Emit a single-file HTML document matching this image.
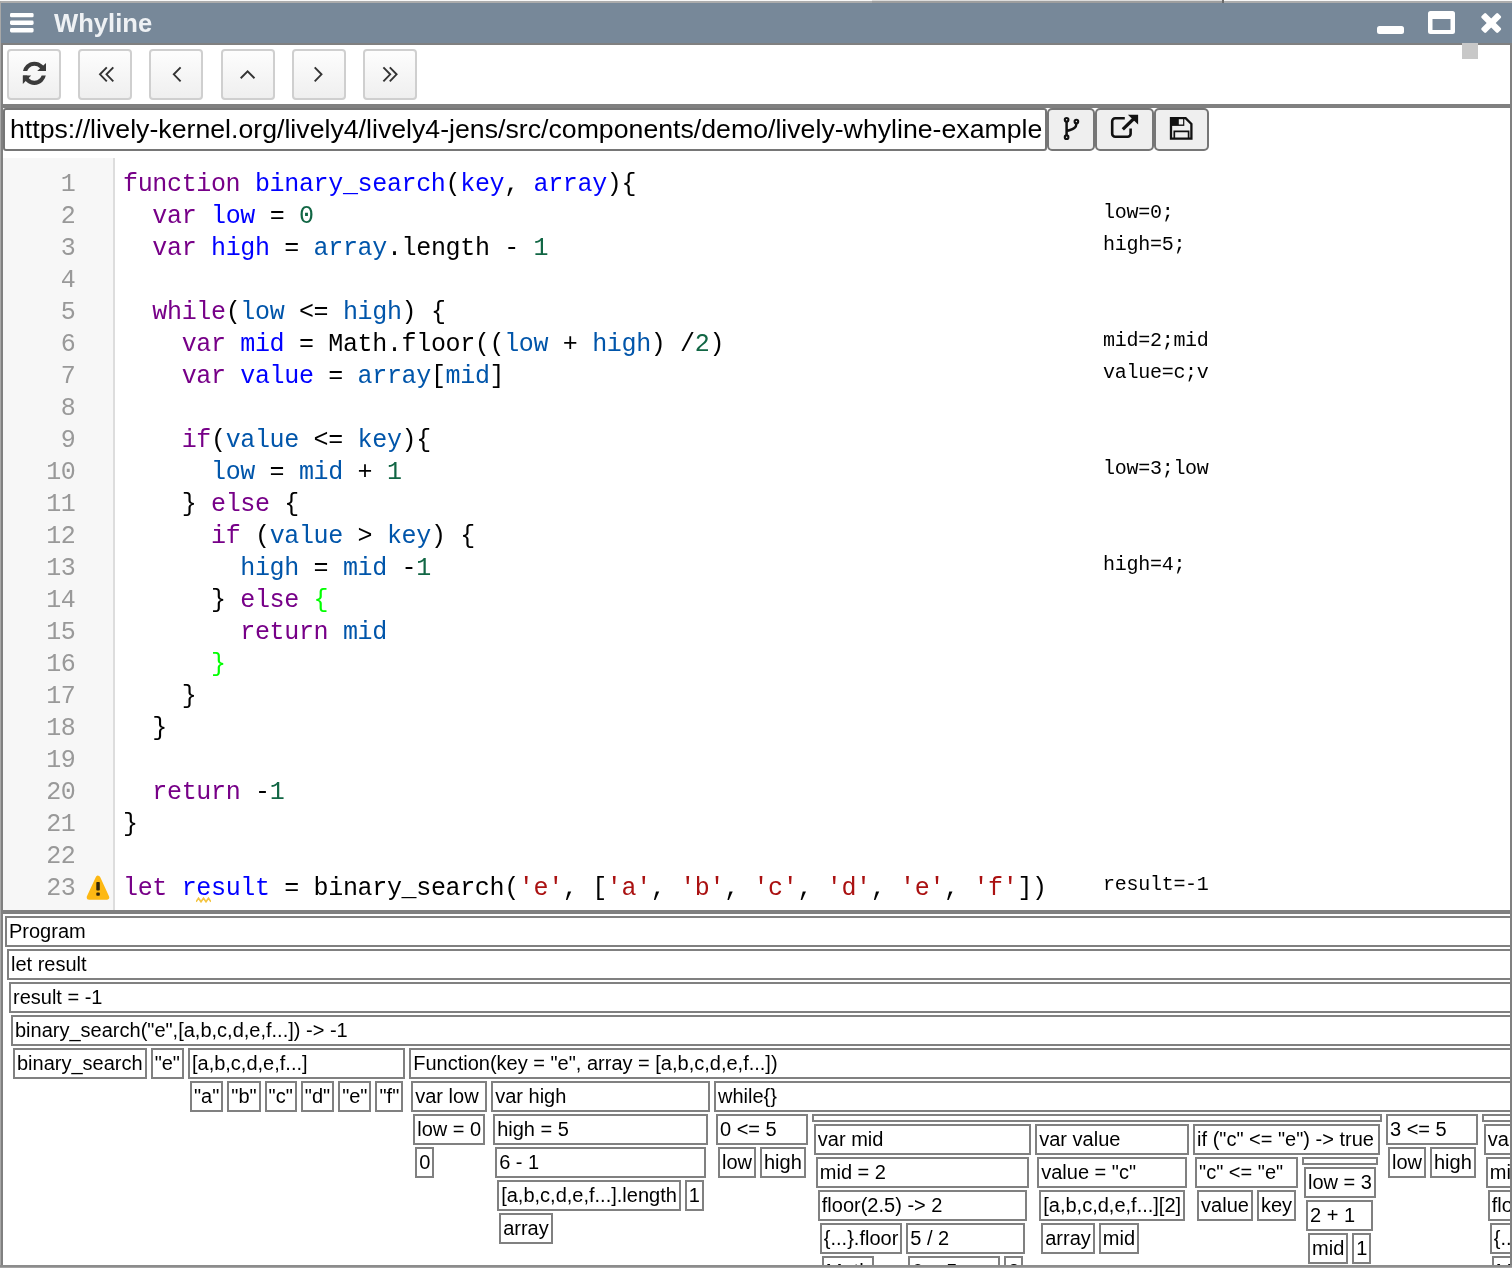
<!DOCTYPE html>
<html lang="en">
<head>
<meta charset="utf-8">
<title>Whyline</title>
<style>
*{box-sizing:border-box;margin:0;padding:0}
html,body{width:1512px;height:1268px;overflow:hidden;background:#f8f8f8}
body{position:relative;font-family:"Liberation Sans",sans-serif;color:#000}
#win{position:absolute;left:0;top:0;width:1512px;height:1268px;overflow:hidden;will-change:transform}
#frame-top{position:absolute;left:0;top:1px;width:1512px;height:2px;background:#acacac}
#frame-left{position:absolute;left:0;top:1px;width:1px;height:1267px;background:#a8a8a8}
#title{position:absolute;left:1px;top:3px;width:1511px;height:40px;background:#778899}
#title .name{position:absolute;left:53px;top:5px;font-weight:bold;font-size:25.6px;line-height:30px;color:#eef1f4;white-space:nowrap}
#title svg{position:absolute}
#content{position:absolute;left:1px;top:43px;width:1511px;height:1224px;border:2px solid #808080;background:#fff}
#grip{position:absolute;left:1462px;top:43px;width:16px;height:16px;background:#c8c8c8}
.nb{position:absolute;top:49px;width:54px;height:51px;border:2px solid #cfcfcf;border-radius:4px;background:linear-gradient(#fdfdfd,#efefef)}
.nb svg{position:absolute;left:0;top:0}
#sep1{position:absolute;left:3px;top:104px;width:1507px;height:4px;background:#808080}
#url{position:absolute;left:3px;top:108px;width:1044px;height:43px;border:2px solid #767676;border-radius:3px;background:#fff;font-size:26.67px;line-height:39px;padding-left:5px;white-space:nowrap;overflow:hidden;color:#000;letter-spacing:0.014px}
#url span{display:block;width:1033px;overflow:hidden}
.ub{position:absolute;top:108px;height:43px;border:2px solid #767676;border-radius:5px;background:#efefef}
.ub svg{position:absolute;left:0;top:0}
#code{position:absolute;left:3px;top:158px;width:1507px;height:752px;background:#fff;overflow:hidden;padding-top:8px;font-family:"Liberation Mono","DejaVu Sans Mono",monospace;font-size:25px;letter-spacing:-0.3425px}
#gutter{position:absolute;left:0;top:0;width:112px;height:752px;background:#f7f7f7;border-right:2px solid #ddd}
.row{position:relative;height:32px;line-height:32px;white-space:pre}
.row .ln{position:absolute;left:0;top:3px;width:72.5px;text-align:right;color:#999}
.row pre{position:absolute;left:120px;top:3px;font:inherit;line-height:32px;color:#000}
.row .an{position:absolute;left:1100px;top:-1px;width:106px;overflow:hidden;font-size:20px;letter-spacing:-0.272px;color:#000}
.row .warn{position:absolute;left:78px;top:0;width:32px;height:32px}
.k{color:#708}.d{color:#00f}.v{color:#05a}.m{color:#164}.s{color:#a11}.g{color:#0f0}
.row .sqg{position:absolute;left:193px;top:26.5px;width:15px;height:6px}
#sep2{position:absolute;left:3px;top:910px;width:1507px;height:4px;background:#808080}
#tree{position:absolute;left:3px;top:914px;width:1507px;height:351px;overflow:hidden;background:#fff;font-size:20px;line-height:23px;display:flex;align-items:flex-start}
.n{margin:2px;flex:none}
.l{border:2px solid #808080;padding:2px;white-space:nowrap;min-height:8px;color:#000}
.c{display:flex;align-items:flex-start}
#frame-bottom{position:absolute;left:0;top:1265px;width:1512px;height:3px;background:#a4a4a4;border-top:2px solid #8c8c8c}

</style>
</head>
<body>
<div id="win">
<div id="frame-top"></div>
<div id="frame-left"></div>
<div style="position:absolute;left:872px;top:0;width:350px;height:1px;background:#dcdcdc"></div><div style="position:absolute;left:872px;top:1px;width:350px;height:2px;background:#9e9e9e"></div><div style="position:absolute;left:1222px;top:0;width:2px;height:3px;background:#6a6a6a"></div>
<div id="content"></div>
<div id="title">
<svg style="left:9px;top:10px" width="24" height="20" viewBox="0 0 24 20"><rect x="0" y="0" width="23.6" height="4.3" rx="1.4" fill="#fff"/><rect x="0" y="7.6" width="23.6" height="4.3" rx="1.4" fill="#fff"/><rect x="0" y="15.1" width="23.6" height="4.3" rx="1.4" fill="#fff"/></svg>
<span class="name">Whyline</span>
<svg style="left:1376px;top:23px" width="28" height="9" viewBox="0 0 28 9"><rect x="0" y="0" width="27" height="8" rx="2.5" fill="#fff"/></svg>
<svg style="left:1426.500px;top:8px" width="28" height="24" viewBox="0 0 28 24"><path fill-rule="evenodd" d="M2.500 0h22a2.500 2.500 0 0 1 2.500 2.500v18a2.500 2.500 0 0 1-2.500 2.500h-22A2.500 2.500 0 0 1 0 20.500v-18A2.500 2.500 0 0 1 2.500 0zM4.500 8v11h18V8z" fill="#fff"/></svg>
<svg style="left:1479px;top:9px" width="23" height="23" viewBox="0 0 23 23"><g transform="translate(11.200,11) rotate(45)" fill="#fff"><rect x="-11.700" y="-3.200" width="23.400" height="6.400" rx="1.400"/><rect x="-3.200" y="-11.700" width="6.400" height="23.400" rx="1.400"/></g></svg>
</div>
<div id="grip"></div>
<div class="nb" style="left:7px"><svg width="50" height="47" viewBox="0 0 50 47"><defs><clipPath id="ct"><rect x="0" y="0" width="50" height="20.050"/></clipPath><clipPath id="cb"><rect x="0" y="24.500" width="50" height="23"/></clipPath></defs><circle cx="25.400" cy="22.300" r="9.550" fill="none" stroke="#3b3b3b" stroke-width="4.100" clip-path="url(#ct)"/><circle cx="25.400" cy="22.300" r="9.550" fill="none" stroke="#3b3b3b" stroke-width="4.100" clip-path="url(#cb)"/><path d="M37 11.900V20.050H28.200z" fill="#3b3b3b"/><path d="M13.800 32.950V24.500H22.200z" fill="#3b3b3b"/></svg></div>
<div class="nb" style="left:78px"><svg width="50" height="47" viewBox="0 0 50 47"><path d="M26.800 16.300l-6.800 7 6.800 7M33.300 16.300l-6.800 7 6.800 7" fill="none" stroke="#333" stroke-width="1.900"/></svg></div>
<div class="nb" style="left:149px"><svg width="50" height="47" viewBox="0 0 50 47"><path d="M29.600 16.300l-6.800 7 6.800 7" fill="none" stroke="#333" stroke-width="1.900"/></svg></div>
<div class="nb" style="left:221px"><svg width="50" height="47" viewBox="0 0 50 47"><path d="M17.700 27.200l6.900-6.800 6.900 6.800" fill="none" stroke="#333" stroke-width="1.900"/></svg></div>
<div class="nb" style="left:292px"><svg width="50" height="47" viewBox="0 0 50 47"><path d="M20.700 16.300l6.800 7-6.800 7" fill="none" stroke="#333" stroke-width="1.900"/></svg></div>
<div class="nb" style="left:363px"><svg width="50" height="47" viewBox="0 0 50 47"><path d="M18.400 16.300l6.800 7-6.800 7M24.800 16.300l6.800 7-6.800 7" fill="none" stroke="#333" stroke-width="1.900"/></svg></div>
<div id="sep1"></div>
<div id="url"><span>https://lively-kernel.org/lively4/lively4-jens/src/components/demo/lively-whyline-example.js</span></div>
<div class="ub" style="left:1047px;width:47.500px"></div>
<div class="ub" style="left:1095px;width:58.500px"></div>
<div class="ub" style="left:1154px;width:54.700px"></div>
<svg id="ubicons" style="position:absolute;left:1047px;top:108px" width="165" height="43" viewBox="1047 108 165 43">
<g fill="none" stroke="#111" stroke-width="2.100"><circle cx="1066.600" cy="119.800" r="1.800"/><circle cx="1076.400" cy="121.500" r="1.800"/><circle cx="1066.600" cy="137.200" r="1.800"/><path stroke-width="2.500" d="M1066.600 121.700V135.300M1076.400 123.400c0 5.200-4.200 5.800-8.800 7.400"/></g>
<path d="M1124.800 118.300H1115.200a3 3 0 0 0-3 3V133.700a3 3 0 0 0 3 3H1127.600a3 3 0 0 0 3-3V128.400" fill="none" stroke="#111" stroke-width="2.600"/><path d="M1122.800 129.300L1134 118.500" stroke="#111" stroke-width="3.200" fill="none"/><path d="M1127.900 114.700h10.200v9.800z" fill="#111"/>
<path d="M1171 118.200H1185.600L1191.400 124V138.600H1171z" fill="none" stroke="#111" stroke-width="2.300"/><path d="M1172 118.200h12.300v7.700H1172z" fill="#111"/><rect x="1178.800" y="119.200" width="4.300" height="5.300" fill="#efefef"/><path d="M1174.300 138.600V131.300H1188.600V138.600" fill="none" stroke="#111" stroke-width="1.700"/>
</svg>
<div id="frame-bottom"></div>

<div id="code">
<div id="gutter"></div>
<div class="row"><span class="ln">1</span><pre><span class="k">function</span> <span class="d">binary_search</span>(<span class="d">key</span>, <span class="d">array</span>){</pre></div>
<div class="row"><span class="ln">2</span><pre>  <span class="k">var</span> <span class="d">low</span> = <span class="m">0</span></pre><span class="an">low=0;</span></div>
<div class="row"><span class="ln">3</span><pre>  <span class="k">var</span> <span class="d">high</span> = <span class="v">array</span>.length - <span class="m">1</span></pre><span class="an">high=5;</span></div>
<div class="row"><span class="ln">4</span><pre></pre></div>
<div class="row"><span class="ln">5</span><pre>  <span class="k">while</span>(<span class="v">low</span> &lt;= <span class="v">high</span>) {</pre></div>
<div class="row"><span class="ln">6</span><pre>    <span class="k">var</span> <span class="d">mid</span> = Math.floor((<span class="v">low</span> + <span class="v">high</span>) /<span class="m">2</span>)</pre><span class="an">mid=2;mid</span></div>
<div class="row"><span class="ln">7</span><pre>    <span class="k">var</span> <span class="d">value</span> = <span class="v">array</span>[<span class="v">mid</span>]</pre><span class="an">value=c;v</span></div>
<div class="row"><span class="ln">8</span><pre></pre></div>
<div class="row"><span class="ln">9</span><pre>    <span class="k">if</span>(<span class="v">value</span> &lt;= <span class="v">key</span>){</pre></div>
<div class="row"><span class="ln">10</span><pre>      <span class="v">low</span> = <span class="v">mid</span> + <span class="m">1</span></pre><span class="an">low=3;low</span></div>
<div class="row"><span class="ln">11</span><pre>    } <span class="k">else</span> {</pre></div>
<div class="row"><span class="ln">12</span><pre>      <span class="k">if</span> (<span class="v">value</span> &gt; <span class="v">key</span>) {</pre></div>
<div class="row"><span class="ln">13</span><pre>        <span class="v">high</span> = <span class="v">mid</span> -<span class="m">1</span></pre><span class="an">high=4;</span></div>
<div class="row"><span class="ln">14</span><pre>      } <span class="k">else</span> <span class="g">{</span></pre></div>
<div class="row"><span class="ln">15</span><pre>        <span class="k">return</span> <span class="v">mid</span></pre></div>
<div class="row"><span class="ln">16</span><pre>      <span class="g">}</span></pre></div>
<div class="row"><span class="ln">17</span><pre>    }</pre></div>
<div class="row"><span class="ln">18</span><pre>  }</pre></div>
<div class="row"><span class="ln">19</span><pre></pre></div>
<div class="row"><span class="ln">20</span><pre>  <span class="k">return</span> -<span class="m">1</span></pre></div>
<div class="row"><span class="ln">21</span><pre>}</pre></div>
<div class="row"><span class="ln">22</span><pre></pre></div>
<div class="row"><span class="ln">23</span><span class="warn"><svg viewBox="0 0 32 32" width="32" height="32"><path d="M17 8.200L25.700 27.200H8.200Z" fill="#fdb813" stroke="#fdb813" stroke-width="5" stroke-linejoin="round"/><rect x="15.300" y="11.900" width="3.500" height="8.700" rx="0.800" fill="#33260a"/><rect x="15.300" y="22.600" width="3.500" height="3.200" rx="0.800" fill="#33260a"/></svg></span><svg class="sqg" viewBox="0 0 15 6"><path d="M0 4.800L2.500 1.200L5 4.800L7.500 1.200L10 4.800L12.500 1.200L15 4.800" fill="none" stroke="#f4c542" stroke-width="1.600"/></svg><pre><span class="k">let</span> <span class="d">result</span> = binary_search(<span class="s">'e'</span>, [<span class="s">'a'</span>, <span class="s">'b'</span>, <span class="s">'c'</span>, <span class="s">'d'</span>, <span class="s">'e'</span>, <span class="s">'f'</span>])</pre><span class="an">result=-1</span></div>
</div>
<div id="sep2"></div>
<div id="tree">
<div class="n"><div class="l">Program</div>
<div class="c">
 <div class="n"><div class="l">let result</div>
 <div class="c">
  <div class="n"><div class="l">result = -1</div>
  <div class="c">
   <div class="n"><div class="l">binary_search("e",[a,b,c,d,e,f...]) -&gt; -1</div>
   <div class="c">
    <div class="n"><div class="l">binary_search</div>
    </div>
    <div class="n"><div class="l">"e"</div>
    </div>
    <div class="n"><div class="l">[a,b,c,d,e,f...]</div>
    <div class="c">
     <div class="n"><div class="l">"a"</div>
     </div>
     <div class="n"><div class="l">"b"</div>
     </div>
     <div class="n"><div class="l">"c"</div>
     </div>
     <div class="n"><div class="l">"d"</div>
     </div>
     <div class="n"><div class="l">"e"</div>
     </div>
     <div class="n"><div class="l">"f"</div>
     </div>
    </div>
    </div>
    <div class="n"><div class="l">Function(key = "e", array = [a,b,c,d,e,f...])</div>
    <div class="c">
     <div class="n"><div class="l">var low</div>
     <div class="c">
      <div class="n"><div class="l">low = 0</div>
      <div class="c">
       <div class="n"><div class="l">0</div>
       </div>
      </div>
      </div>
     </div>
     </div>
     <div class="n"><div class="l">var high</div>
     <div class="c">
      <div class="n"><div class="l">high = 5</div>
      <div class="c">
       <div class="n"><div class="l">6 - 1</div>
       <div class="c">
        <div class="n"><div class="l">[a,b,c,d,e,f...].length</div>
        <div class="c">
         <div class="n"><div class="l">array</div>
         </div>
        </div>
        </div>
        <div class="n"><div class="l">1</div>
        </div>
       </div>
       </div>
      </div>
      </div>
     </div>
     </div>
     <div class="n"><div class="l">while{}</div>
     <div class="c">
      <div class="n"><div class="l">0 &lt;= 5</div>
      <div class="c">
       <div class="n"><div class="l">low</div>
       </div>
       <div class="n"><div class="l">high</div>
       </div>
      </div>
      </div>
      <div class="n"><div class="l"></div>
      <div class="c">
       <div class="n"><div class="l">var mid</div>
       <div class="c">
        <div class="n"><div class="l">mid = 2</div>
        <div class="c">
         <div class="n"><div class="l">floor(2.5) -&gt; 2</div>
         <div class="c">
          <div class="n"><div class="l">{...}.floor</div>
          <div class="c">
           <div class="n"><div class="l">Math</div>
           </div>
          </div>
          </div>
          <div class="n"><div class="l">5 / 2</div>
          <div class="c">
           <div class="n"><div class="l">0 + 5</div>
           <div class="c">
            <div class="n"><div class="l">low</div>
            </div>
            <div class="n"><div class="l">high</div>
            </div>
           </div>
           </div>
           <div class="n"><div class="l">2</div>
           </div>
          </div>
          </div>
         </div>
         </div>
        </div>
        </div>
       </div>
       </div>
       <div class="n"><div class="l">var value</div>
       <div class="c">
        <div class="n"><div class="l">value = "c"</div>
        <div class="c">
         <div class="n"><div class="l">[a,b,c,d,e,f...][2]</div>
         <div class="c">
          <div class="n"><div class="l">array</div>
          </div>
          <div class="n"><div class="l">mid</div>
          </div>
         </div>
         </div>
        </div>
        </div>
       </div>
       </div>
       <div class="n"><div class="l">if ("c" &lt;= "e") -&gt; true</div>
       <div class="c">
        <div class="n"><div class="l">"c" &lt;= "e"</div>
        <div class="c">
         <div class="n"><div class="l">value</div>
         </div>
         <div class="n"><div class="l">key</div>
         </div>
        </div>
        </div>
        <div class="n"><div class="l"></div>
        <div class="c">
         <div class="n"><div class="l">low = 3</div>
         <div class="c">
          <div class="n"><div class="l">2 + 1</div>
          <div class="c">
           <div class="n"><div class="l">mid</div>
           </div>
           <div class="n"><div class="l">1</div>
           </div>
          </div>
          </div>
         </div>
         </div>
        </div>
        </div>
       </div>
       </div>
      </div>
      </div>
      <div class="n"><div class="l">3 &lt;= 5</div>
      <div class="c">
       <div class="n"><div class="l">low</div>
       </div>
       <div class="n"><div class="l">high</div>
       </div>
      </div>
      </div>
      <div class="n"><div class="l"></div>
      <div class="c">
       <div class="n"><div class="l">var mid</div>
       <div class="c">
        <div class="n"><div class="l">mid = 4</div>
        <div class="c">
         <div class="n"><div class="l">floor(4) -&gt; 4</div>
         <div class="c">
          <div class="n"><div class="l">{...}.floor</div>
          <div class="c">
           <div class="n"><div class="l">Math</div>
           </div>
          </div>
          </div>
          <div class="n"><div class="l">8 / 2</div>
          <div class="c">
           <div class="n"><div class="l">3 + 5</div>
           <div class="c">
            <div class="n"><div class="l">low</div>
            </div>
            <div class="n"><div class="l">high</div>
            </div>
           </div>
           </div>
           <div class="n"><div class="l">2</div>
           </div>
          </div>
          </div>
         </div>
         </div>
        </div>
        </div>
       </div>
       </div>
       <div class="n"><div class="l">var value</div>
       <div class="c">
        <div class="n"><div class="l">value = "e"</div>
        <div class="c">
         <div class="n"><div class="l">[a,b,c,d,e,f...][4]</div>
         <div class="c">
          <div class="n"><div class="l">array</div>
          </div>
          <div class="n"><div class="l">mid</div>
          </div>
         </div>
         </div>
        </div>
        </div>
       </div>
       </div>
       <div class="n"><div class="l">if ("e" &lt;= "e") -&gt; true</div>
       <div class="c">
        <div class="n"><div class="l">"e" &lt;= "e"</div>
        <div class="c">
         <div class="n"><div class="l">value</div>
         </div>
         <div class="n"><div class="l">key</div>
         </div>
        </div>
        </div>
        <div class="n"><div class="l"></div>
        <div class="c">
         <div class="n"><div class="l">low = 5</div>
         <div class="c">
          <div class="n"><div class="l">4 + 1</div>
          <div class="c">
           <div class="n"><div class="l">mid</div>
           </div>
           <div class="n"><div class="l">1</div>
           </div>
          </div>
          </div>
         </div>
         </div>
        </div>
        </div>
       </div>
       </div>
      </div>
      </div>
      <div class="n"><div class="l">5 &lt;= 5</div>
      <div class="c">
       <div class="n"><div class="l">low</div>
       </div>
       <div class="n"><div class="l">high</div>
       </div>
      </div>
      </div>
     </div>
     </div>
    </div>
    </div>
   </div>
   </div>
  </div>
  </div>
 </div>
 </div>
</div>
</div>
</div>
</div>
</body>
</html>
